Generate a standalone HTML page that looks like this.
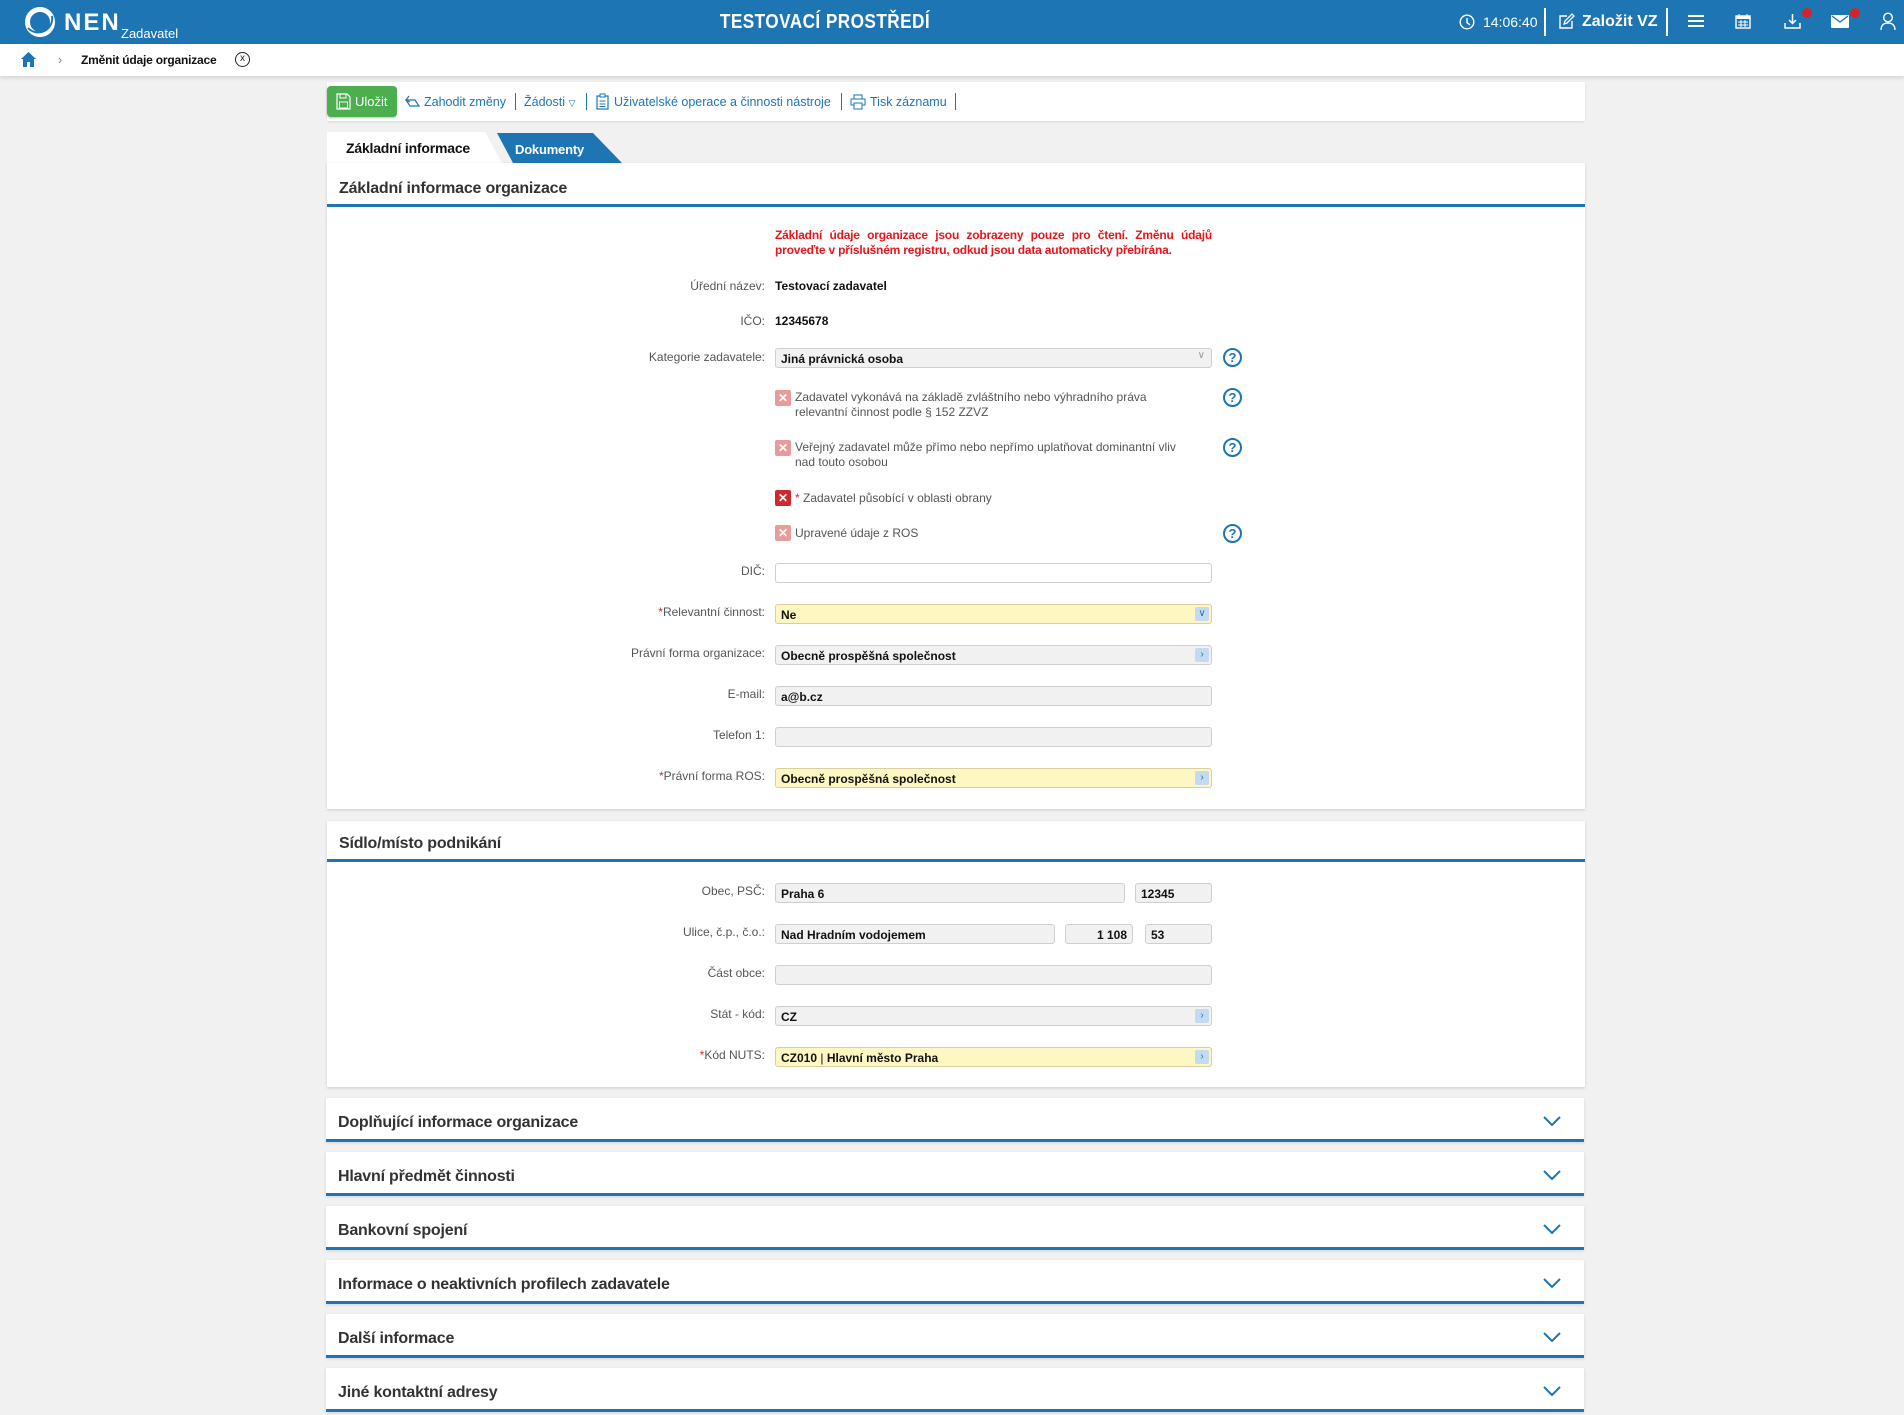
<!DOCTYPE html>
<html><head><meta charset="utf-8">
<style>
*{box-sizing:border-box;margin:0;padding:0}
body{width:1904px;height:1415px;background:#f1f1f1;font-family:"Liberation Sans",Arial,sans-serif;position:relative;overflow:hidden;color:#222}
.a{position:absolute}
#hdr{left:0;top:0;width:1904px;height:44px;background:#1e75b3}
#bc{left:0;top:44px;width:1904px;height:32px;background:#fff;box-shadow:0 2px 4px rgba(0,0,0,.12)}
.panel{background:#fff;box-shadow:0 1px 3px rgba(0,0,0,.15)}
.ptitle{position:absolute;left:12px;font-weight:bold;font-size:16px;color:#333;letter-spacing:-0.2px}
.pline{position:absolute;left:0;right:0;height:3px;background:#1e75b3}
.lbl{position:absolute;right:1139px;font-size:12px;color:#555;white-space:nowrap;text-align:right}
.req{color:#d22}
.val{position:absolute;left:775px;font-size:12px;font-weight:bold;color:#111}
.inp{position:absolute;height:20px;border:1px solid #cfcfcf;border-radius:3px;background:#f1f1f1;font-size:12px;font-weight:bold;color:#111;padding:3px 0 0 5px;white-space:nowrap}
.y{background:#fff7c2;border-color:#d8d0a0}
.w{background:#fff}
.btn{position:absolute;right:2px;top:2px;width:14px;height:14px;background:#c4daf3;border-radius:2px;color:#1e75b3;font-size:10px;text-align:center;line-height:14px;font-weight:normal}
.cb{position:absolute;left:775px;width:16px;height:16px;border-radius:2px;background:#e99a9a;color:#fff;font-size:12px;font-weight:bold;text-align:center;line-height:16px}
.cbt{position:absolute;left:795px;font-size:12px;color:#555;line-height:15px}
.help{position:absolute;left:1223px;width:19px;height:19px;border:2px solid #1e75b3;border-radius:50%;color:#1e75b3;font-weight:bold;font-size:13px;text-align:center;line-height:15px}
.tb{position:absolute;top:95px;font-size:12.5px;color:#1e75b3;white-space:nowrap}
.div{position:absolute;top:93px;width:1px;height:17px;background:#1e75b3}
.sec{position:absolute;left:326px;width:1258px;height:44px;background:#fff;box-shadow:0 1px 3px rgba(0,0,0,.12)}
.sec .t{position:absolute;left:12px;top:16px;font-size:16px;font-weight:bold;color:#333;letter-spacing:-0.2px}
.sec .l{position:absolute;left:0;right:0;bottom:0;height:3px;background:#1e75b3}
.sec svg{position:absolute;left:1216px;top:17px}
</style></head><body>
<div id="hdr" class="a">
 <svg class="a" style="left:24px;top:6px" width="32" height="32" viewBox="0 0 32 32"><circle cx="16" cy="16" r="12.5" fill="none" stroke="#fff" stroke-width="5"/><path d="M4 22 A14 14 0 0 0 28 10" fill="none" stroke="#1e75b3" stroke-width="2"/></svg>
 <div class="a" style="left:64px;top:9px;color:#fff;font-weight:bold;font-size:24px;letter-spacing:2px">NEN</div>
 <div class="a" style="left:121px;top:26px;color:#fff;font-size:13px">Zadavatel</div>
 <div class="a" style="left:690px;top:11px;width:270px;text-align:center;color:#fff;font-weight:bold;font-size:20px;transform:scaleX(.86);letter-spacing:0.5px">TESTOVACÍ PROSTŘEDÍ</div>
 <svg class="a" style="left:1459px;top:14px" width="16" height="16" viewBox="0 0 16 16"><circle cx="8" cy="8" r="6.8" fill="none" stroke="#fff" stroke-width="1.4"/><path d="M8 4v4.5l3 2.5" fill="none" stroke="#fff" stroke-width="1.4"/></svg>
 <div class="a" style="left:1483px;top:14px;color:#fff;font-size:14px">14:06:40</div>
 <div class="a" style="left:1544px;top:8px;width:2px;height:28px;background:#fff"></div>
 <svg class="a" style="left:1558px;top:13px" width="17" height="17" viewBox="0 0 17 17"><path d="M9 3H2v12h12V8" fill="none" stroke="#fff" stroke-width="1.4"/><path d="M6 11l1-3 7-7 2 2-7 7z" fill="none" stroke="#fff" stroke-width="1.3"/></svg>
 <div class="a" style="left:1582px;top:13px;color:#fff;font-size:16px;font-weight:bold">Založit VZ</div>
 <div class="a" style="left:1666px;top:8px;width:2px;height:28px;background:#fff"></div>
 <svg class="a" style="left:1688px;top:14px" width="16" height="14"><rect y="1" width="16" height="2" fill="#fff"/><rect y="6" width="16" height="2" fill="#fff"/><rect y="11" width="16" height="2" fill="#fff"/></svg>
 <svg class="a" style="left:1735px;top:13px" width="16" height="16" viewBox="0 0 16 16"><rect x="1" y="3" width="14" height="12" fill="none" stroke="#fff" stroke-width="1.4"/><rect x="1" y="3" width="14" height="3" fill="#fff"/><path d="M4 1v3M12 1v3M3 9h10M3 12h10M6 7v7M10 7v7" stroke="#fff" stroke-width="1"/></svg>
 <svg class="a" style="left:1784px;top:13px" width="17" height="17" viewBox="0 0 17 17"><path d="M8.5 1v9M5 7l3.5 3.5L12 7" fill="none" stroke="#fff" stroke-width="1.5"/><path d="M1 10v5h15v-5" fill="none" stroke="#fff" stroke-width="1.5"/></svg>
 <div class="a" style="left:1802px;top:8px;width:10px;height:10px;border-radius:50%;background:#d4242b"></div>
 <svg class="a" style="left:1831px;top:15px" width="18" height="13" viewBox="0 0 18 13"><rect width="18" height="13" rx="1" fill="#fff"/><path d="M1 1l8 6 8-6" fill="none" stroke="#1e75b3" stroke-width="1.3"/></svg>
 <div class="a" style="left:1850px;top:8px;width:10px;height:10px;border-radius:50%;background:#d4242b"></div>
 <svg class="a" style="left:1880px;top:12px" width="16" height="19" viewBox="0 0 16 19"><circle cx="8" cy="5.5" r="4.3" fill="none" stroke="#fff" stroke-width="1.4"/><path d="M1 18c0-5 3-7 7-7s7 2 7 7" fill="none" stroke="#fff" stroke-width="1.4"/></svg>
</div>
<div id="bc" class="a">
 <svg class="a" style="left:20px;top:7px" width="17" height="17" viewBox="0 0 17 17"><path d="M8.5 1L1 8h2v8h4v-5h3v5h4V8h2z" fill="#1e75b3"/></svg>
 <div class="a" style="left:58px;top:8px;color:#888;font-size:13px">&#x203A;</div>
 <div class="a" style="left:81px;top:9px;font-size:12px;font-weight:bold;color:#111;letter-spacing:-0.2px">Změnit údaje organizace</div>
 <div class="a" style="left:235px;top:8px;width:15px;height:15px;border:1.3px solid #222;border-radius:50%;font-size:10px;text-align:center;line-height:12px">x</div>
</div>

<div class="a" style="left:327px;top:82px;width:1258px;height:39px;background:#fff;box-shadow:0 1px 2px rgba(0,0,0,.1)"></div>
<div class="a" style="left:327px;top:86px;width:70px;height:31px;background:#4cae4f;border-radius:4px;box-shadow:0 1px 2px rgba(0,0,0,.25)">
 <svg class="a" style="left:9px;top:7px" width="15" height="17" viewBox="0 0 15 17"><path d="M1 1h10l3 3v12H1z" fill="none" stroke="#fff" stroke-width="1.2"/><rect x="4" y="1" width="6" height="4" fill="none" stroke="#fff"/><rect x="3.5" y="9" width="8" height="6" fill="none" stroke="#fff"/></svg>
 <div class="a" style="left:28px;top:8px;color:#fff;font-size:13px">Uložit</div>
</div>
<svg class="a" style="left:404px;top:95px" width="17" height="13" viewBox="0 0 17 13"><path d="M2 5h9l4 6H6z" fill="none" stroke="#1e75b3" stroke-width="1.2"/><path d="M5 1L2 5l4 2" fill="none" stroke="#1e75b3" stroke-width="1.2"/></svg>
<div class="tb" style="left:424px">Zahodit změny</div><div class="div" style="left:515px"></div>
<div class="tb" style="left:524px">Žádosti <span style="font-size:9px">▽</span></div><div class="div" style="left:586px"></div>
<svg class="a" style="left:596px;top:93px" width="13" height="17" viewBox="0 0 13 17"><rect x="1" y="3" width="11" height="13" fill="none" stroke="#1e75b3" stroke-width="1.2"/><rect x="4" y="1" width="5" height="3" fill="#fff" stroke="#1e75b3"/><path d="M3.5 8h6M3.5 11h6M3.5 13.5h6" stroke="#1e75b3"/></svg>
<div class="tb" style="left:614px">Uživatelské operace a činnosti nástroje</div><div class="div" style="left:841px"></div>
<svg class="a" style="left:850px;top:94px" width="16" height="16" viewBox="0 0 16 16"><rect x="4" y="1" width="8" height="4" fill="none" stroke="#1e75b3"/><rect x="1" y="5" width="14" height="6" fill="none" stroke="#1e75b3"/><rect x="4" y="9" width="8" height="6" fill="#fff" stroke="#1e75b3"/></svg>
<div class="tb" style="left:870px">Tisk záznamu</div><div class="div" style="left:955px"></div>

<svg class="a" style="left:327px;top:132px" width="300" height="32"><polygon points="0,0 158,0 175,31 0,31" fill="#fff"/><polygon points="170,1 266,1 295,31 186,31" fill="#1e75b3"/></svg>
<div class="a" style="left:346px;top:140px;font-size:14px;font-weight:bold;color:#111;letter-spacing:-0.2px">Základní informace</div>
<div class="a" style="left:515px;top:142px;font-size:13px;font-weight:bold;color:#fff;letter-spacing:-0.2px">Dokumenty</div>

<div class="a panel" style="left:327px;top:163px;width:1258px;height:646px">
 <div class="ptitle" style="top:17px">Základní informace organizace</div>
 <div class="pline" style="top:41px"></div>
</div>
<div class="a" style="left:775px;top:228px;width:437px;font-size:12px;font-weight:bold;color:#e8141b;text-align:justify;text-align-last:left;line-height:15px;letter-spacing:-0.2px">Základní údaje organizace jsou zobrazeny pouze pro čtení. Změnu údajů proveďte v příslušném registru, odkud jsou data automaticky přebírána.</div>
<div class="lbl" style="top:279px">Úřední název:</div><div class="val" style="top:279px">Testovací zadavatel</div>
<div class="lbl" style="top:314px">IČO:</div><div class="val" style="top:314px">12345678</div>
<div class="lbl" style="top:350px">Kategorie zadavatele:</div>
<div class="inp" style="left:775px;top:348px;width:437px">Jiná právnická osoba<span style="position:absolute;right:6px;top:1px;color:#999;font-weight:normal;font-size:10px">&#x2228;</span></div>
<div class="help" style="top:348px">?</div>
<div class="cb" style="top:390px">✕</div><div class="cbt" style="top:390px">Zadavatel vykonává na základě zvláštního nebo výhradního práva<br>relevantní činnost podle § 152 ZZVZ</div><div class="help" style="top:388px">?</div>
<div class="cb" style="top:440px">✕</div><div class="cbt" style="top:440px">Veřejný zadavatel může přímo nebo nepřímo uplatňovat dominantní vliv<br>nad touto osobou</div><div class="help" style="top:438px">?</div>
<div class="cb" style="top:490px;background:#d0282c">✕</div><div class="cbt" style="top:491px"><span class="req">*</span> Zadavatel působící v oblasti obrany</div>
<div class="cb" style="top:525px">✕</div><div class="cbt" style="top:526px">Upravené údaje z ROS</div><div class="help" style="top:524px">?</div>

<div class="lbl" style="top:564px">DIČ:</div><div class="inp w" style="left:775px;top:563px;width:437px"></div>
<div class="lbl" style="top:605px"><span class="req">*</span>Relevantní činnost:</div><div class="inp y" style="left:775px;top:604px;width:437px">Ne<span class="btn">&#x2228;</span></div>
<div class="lbl" style="top:646px">Právní forma organizace:</div><div class="inp" style="left:775px;top:645px;width:437px">Obecně prospěšná společnost<span class="btn">&#x203A;</span></div>
<div class="lbl" style="top:687px">E-mail:</div><div class="inp" style="left:775px;top:686px;width:437px">a@b.cz</div>
<div class="lbl" style="top:728px">Telefon 1:</div><div class="inp" style="left:775px;top:727px;width:437px"></div>
<div class="lbl" style="top:769px"><span class="req">*</span>Právní forma ROS:</div><div class="inp y" style="left:775px;top:768px;width:437px">Obecně prospěšná společnost<span class="btn">&#x203A;</span></div>

<div class="a panel" style="left:327px;top:821px;width:1258px;height:266px">
 <div class="ptitle" style="top:14px">Sídlo/místo podnikání</div>
 <div class="pline" style="top:38px"></div>
</div>
<div class="lbl" style="top:884px">Obec, PSČ:</div><div class="inp" style="left:775px;top:883px;width:350px">Praha 6</div><div class="inp" style="left:1135px;top:883px;width:77px">12345</div>
<div class="lbl" style="top:925px">Ulice, č.p., č.o.:</div><div class="inp" style="left:775px;top:924px;width:280px">Nad Hradním vodojemem</div><div class="inp" style="left:1065px;top:924px;width:68px;text-align:right;padding-right:5px">1 108</div><div class="inp" style="left:1145px;top:924px;width:67px">53</div>
<div class="lbl" style="top:966px">Část obce:</div><div class="inp" style="left:775px;top:965px;width:437px"></div>
<div class="lbl" style="top:1007px">Stát - kód:</div><div class="inp" style="left:775px;top:1006px;width:437px">CZ<span class="btn">&#x203A;</span></div>
<div class="lbl" style="top:1048px"><span class="req">*</span>Kód NUTS:</div><div class="inp y" style="left:775px;top:1047px;width:437px">CZ010 <span style="font-weight:normal">|</span> Hlavní město Praha<span class="btn">&#x203A;</span></div>

<div class="sec" style="top:1098px"><div class="t">Doplňující informace organizace</div><svg width="20" height="12"><path d="M2 2l8 8 8-8" fill="none" stroke="#1e75b3" stroke-width="2"/></svg><div class="l"></div></div>
<div class="sec" style="top:1152px"><div class="t">Hlavní předmět činnosti</div><svg width="20" height="12"><path d="M2 2l8 8 8-8" fill="none" stroke="#1e75b3" stroke-width="2"/></svg><div class="l"></div></div>
<div class="sec" style="top:1206px"><div class="t">Bankovní spojení</div><svg width="20" height="12"><path d="M2 2l8 8 8-8" fill="none" stroke="#1e75b3" stroke-width="2"/></svg><div class="l"></div></div>
<div class="sec" style="top:1260px"><div class="t">Informace o neaktivních profilech zadavatele</div><svg width="20" height="12"><path d="M2 2l8 8 8-8" fill="none" stroke="#1e75b3" stroke-width="2"/></svg><div class="l"></div></div>
<div class="sec" style="top:1314px"><div class="t">Další informace</div><svg width="20" height="12"><path d="M2 2l8 8 8-8" fill="none" stroke="#1e75b3" stroke-width="2"/></svg><div class="l"></div></div>
<div class="sec" style="top:1368px"><div class="t">Jiné kontaktní adresy</div><svg width="20" height="12"><path d="M2 2l8 8 8-8" fill="none" stroke="#1e75b3" stroke-width="2"/></svg><div class="l"></div></div>
</body></html>
